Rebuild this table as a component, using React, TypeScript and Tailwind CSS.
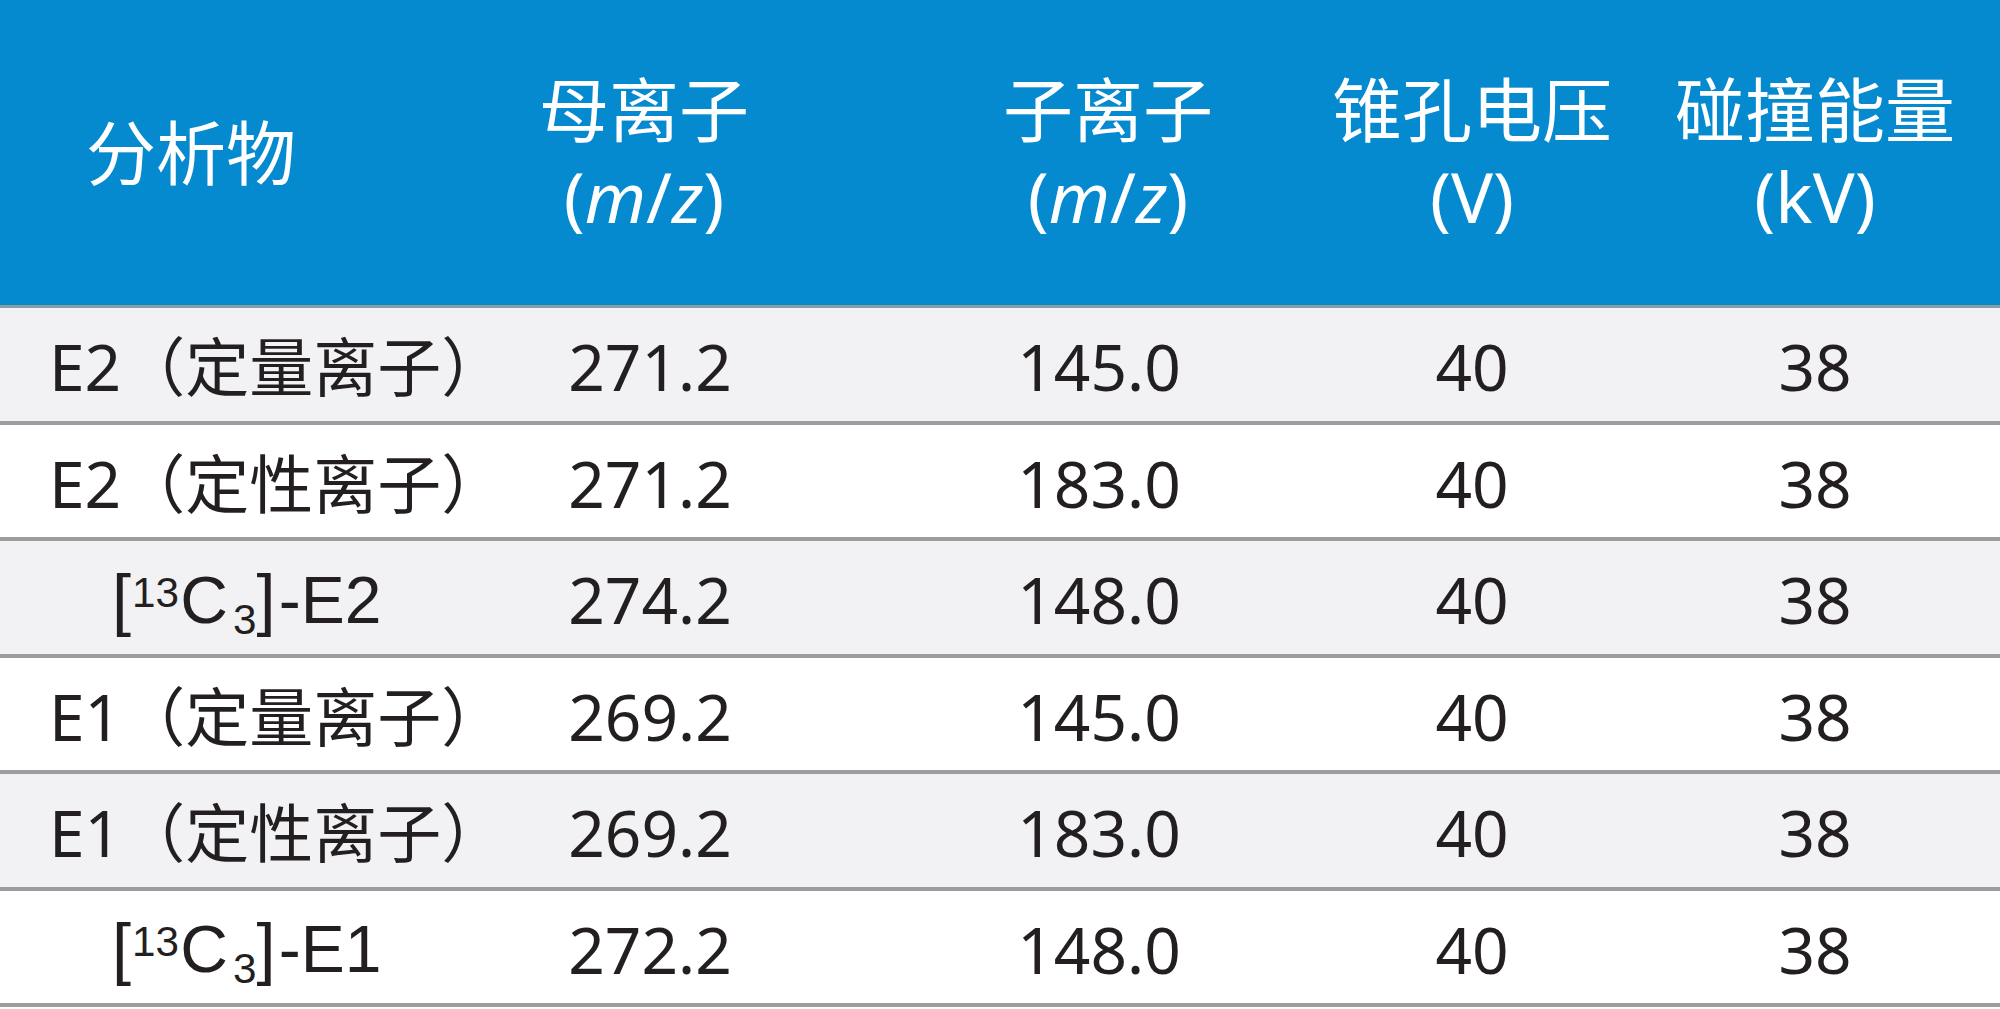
import React from "react";

type Row = {
  name: React.ReactNode;
  pad: string;
  parent: string;
  product: string;
  cone: string;
  energy: string;
  bg: string;
};

// [13C3]-Ex label, set in an Arial-like face like the source table
const iso = (tail: string) => (
  <span className="inline-flex items-baseline font-['Liberation_Sans',sans-serif] text-[66px]">
    <span className="text-[1.04em]">[</span>
    <span className="relative -top-[0.38em] text-[0.64em] ml-[0.02em] mr-[0.03em]">13</span>
    <span>C</span>
    <span className="relative top-[0.26em] text-[0.64em] ml-[0.12em]">3</span>
    <span className="text-[1.04em]">]</span>
    <span className="ml-[0.05em]">-{tail}</span>
  </span>
);

const rows: Row[] = [
  { name: "E2（定量离子）", pad: "pl-[49px]", parent: "271.2", product: "145.0", cone: "40", energy: "38", bg: "bg-[#f2f2f4]" },
  { name: "E2（定性离子）", pad: "pl-[49px]", parent: "271.2", product: "183.0", cone: "40", energy: "38", bg: "bg-white" },
  { name: iso("E2"), pad: "pl-[112px]", parent: "274.2", product: "148.0", cone: "40", energy: "38", bg: "bg-[#f2f2f4]" },
  { name: "E1（定量离子）", pad: "pl-[49px]", parent: "269.2", product: "145.0", cone: "40", energy: "38", bg: "bg-white" },
  { name: "E1（定性离子）", pad: "pl-[49px]", parent: "269.2", product: "183.0", cone: "40", energy: "38", bg: "bg-[#f2f2f4]" },
  { name: iso("E1"), pad: "pl-[112px]", parent: "272.2", product: "148.0", cone: "40", energy: "38", bg: "bg-white" },
];

const cols = "grid grid-cols-[416px_468px_430px_316px_370px]";

export default function App() {
  return (
    <div
      className="w-[2000px] h-[1009px] bg-white overflow-hidden text-[#231f20]"
      style={{ fontFamily: '"Noto Sans", "Noto Sans CJK SC", sans-serif' }}
    >
      {/* header */}
      <div className={`${cols} h-[308px] bg-[#0589cf] border-b-[3px] border-[#8c9ca6] text-white text-[70px] leading-[86px]`}>
        <div className="flex items-center justify-center pr-[34px]">分析物</div>
        <div className="flex flex-col items-center justify-center pr-[12px]">
          <span>母离子</span>
          <span>(<i>m</i>/<i>z</i>)</span>
        </div>
        <div className="flex flex-col items-center justify-center pl-[18px]">
          <span>子离子</span>
          <span>(<i>m</i>/<i>z</i>)</span>
        </div>
        <div className="flex flex-col items-center justify-center">
          <span>锥孔电压</span>
          <span>(V)</span>
        </div>
        <div className="flex flex-col items-center justify-center">
          <span>碰撞能量</span>
          <span>(kV)</span>
        </div>
      </div>

      {/* body */}
      {rows.map((r, i) => (
        <div
          key={i}
          className={`${cols} h-[116.5px] border-b-[4px] border-[#9d9d9f] ${r.bg} text-[64px] leading-none`}
        >
          <div className={`flex items-center whitespace-nowrap pt-[6px] ${r.pad}`}>{r.name}</div>
          <div className="flex items-center justify-center pt-[6px]">{r.parent}</div>
          <div className="flex items-center justify-center pt-[6px]">{r.product}</div>
          <div className="flex items-center justify-center pt-[6px]">{r.cone}</div>
          <div className="flex items-center justify-center pt-[6px]">{r.energy}</div>
        </div>
      ))}
    </div>
  );
}
